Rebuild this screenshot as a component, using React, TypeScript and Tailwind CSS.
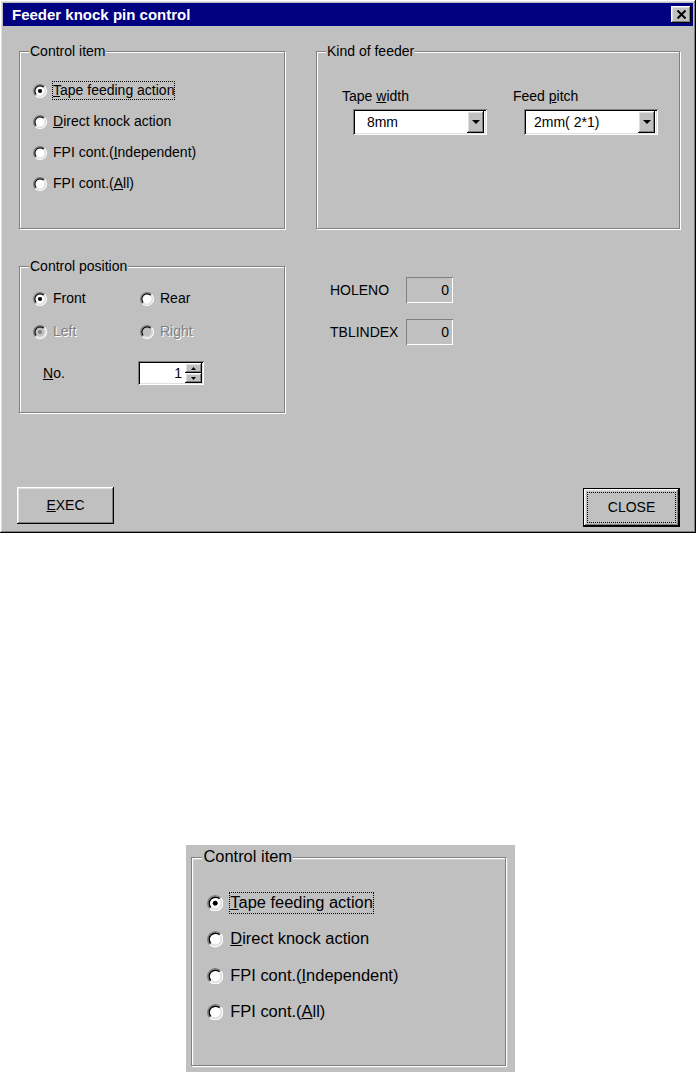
import React from 'react';

// Win95 bevels
const raised =
  'bg-[#c0c0c0] shadow-[inset_-1px_-1px_0_#000,inset_1px_1px_0_#fff,inset_-2px_-2px_0_#808080,inset_2px_2px_0_#dfdfdf]';
const sunken =
  'shadow-[inset_1px_1px_0_#808080,inset_-1px_-1px_0_#fff,inset_2px_2px_0_#000,inset_-2px_-2px_0_#dfdfdf]';

type RadioProps = {
  checked?: boolean;
  disabled?: boolean;
  focused?: boolean;
  children: React.ReactNode;
};

const RadioMark = ({ checked, disabled }: { checked?: boolean; disabled?: boolean }) => (
  <svg width="14" height="14" viewBox="0 0 12 12" className="shrink-0">
    <circle cx="6" cy="6" r="4.5" fill={disabled ? '#c0c0c0' : '#fff'} />
    <path d="M2.11 9.89A5.5 5.5 0 0 1 9.89 2.11" fill="none" stroke="#808080" />
    <path d="M9.89 2.11A5.5 5.5 0 0 1 2.11 9.89" fill="none" stroke="#fff" />
    <path d="M2.82 9.18A4.5 4.5 0 0 1 9.18 2.82" fill="none" stroke="#000" />
    <path d="M9.18 2.82A4.5 4.5 0 0 1 2.82 9.18" fill="none" stroke="#dfdfdf" />
    {checked && <circle cx="6" cy="6" r="1.8" fill={disabled ? '#808080' : '#000'} />}
  </svg>
);

const Radio = ({ checked, disabled, focused, children }: RadioProps) => (
  <div className="flex items-center">
    <RadioMark checked={checked} disabled={disabled} />
    <span
      className={`ml-[5px] whitespace-nowrap border leading-[17px] ${
        focused ? 'border-dotted border-black' : 'border-transparent'
      } ${disabled ? 'text-[#808080] [text-shadow:1px_1px_0_#fff]' : ''}`}
    >
      {children}
    </span>
  </div>
);

const GroupBox = ({
  label,
  className,
  children,
}: {
  label: string;
  className: string;
  children: React.ReactNode;
}) => (
  <div className={`relative shrink-0 border border-[#808080] shadow-[1px_1px_0_#fff,inset_1px_1px_0_#fff] ${className}`}>
    <span className="absolute left-[9px] top-[-9px] whitespace-nowrap bg-[#c0c0c0] px-[1px] leading-[16px]">
      {label}
    </span>
    {children}
  </div>
);

const ControlItemGroup = ({ className }: { className: string }) => (
  <GroupBox label="Control item" className={`h-[178px] ${className}`}>
    <div className="flex flex-col pl-[13px] pt-[23px]">
      <div className="flex h-[31px] items-center">
        <Radio checked focused>
          <u>T</u>ape feeding action
        </Radio>
      </div>
      <div className="flex h-[31px] items-center">
        <Radio>
          <u>D</u>irect knock action
        </Radio>
      </div>
      <div className="flex h-[31px] items-center">
        <Radio>
          FPI cont.(<u>I</u>ndependent)
        </Radio>
      </div>
      <div className="flex h-[31px] items-center">
        <Radio>
          FPI cont.(<u>A</u>ll)
        </Radio>
      </div>
    </div>
  </GroupBox>
);

const Combo = ({ value }: { value: string }) => (
  <div className={`ml-[11px] mt-[4px] flex h-[26px] w-[134px] bg-white p-[2px] ${sunken}`}>
    <div className="min-w-0 flex-1 whitespace-pre pl-[8px] leading-[22px]">{value}</div>
    <div className={`mr-[1px] flex w-[17px] shrink-0 items-center justify-center ${raised}`}>
      <svg width="8" height="4" viewBox="0 0 8 4">
        <polygon points="0,0 8,0 4,4" fill="#000" />
      </svg>
    </div>
  </div>
);

const Spin = ({ value }: { value: string }) => (
  <div className={`flex h-[24px] w-[66px] bg-white p-[2px] ${sunken}`}>
    <div className="min-w-0 flex-1 pr-[3px] text-right leading-[20px]">{value}</div>
    <div className="flex w-[17px] shrink-0 flex-col">
      <div className={`flex flex-1 items-center justify-center ${raised}`}>
        <svg width="5" height="3" viewBox="0 0 5 3">
          <polygon points="0,3 5,3 2.5,0" fill="#000" />
        </svg>
      </div>
      <div className={`flex flex-1 items-center justify-center ${raised}`}>
        <svg width="5" height="3" viewBox="0 0 5 3">
          <polygon points="0,0 5,0 2.5,3" fill="#000" />
        </svg>
      </div>
    </div>
  </div>
);

const Field = ({ label, value, className = '' }: { label: string; value: string; className?: string }) => (
  <div className={`flex items-center ${className}`}>
    <span className="w-[76px]">{label}</span>
    <div className="h-[26px] w-[47px] pr-[4px] text-right leading-[26px] shadow-[inset_1px_1px_0_#808080,inset_-1px_-1px_0_#fff]">
      {value}
    </div>
  </div>
);

const Dialog = () => (
  <div className={`h-[533px] w-[696px] p-[3px] ${raised}`}>
    <div className="flex h-[23px] items-center justify-between bg-[#000080] pl-[9px] pr-[2px]">
      <span className="text-[15px] font-bold leading-[23px] text-white">Feeder knock pin control</span>
      <div className={`flex h-[17px] w-[20px] items-center justify-center ${raised}`}>
        <svg width="11" height="9" viewBox="0 0 11 9">
          <path d="M1.5 0.5 L9.5 8.5 M9.5 0.5 L1.5 8.5" stroke="#000" strokeWidth="2" />
        </svg>
      </div>
    </div>

    <div className="pl-[16px]">
      <div className="mt-[25px] flex">
        <ControlItemGroup className="w-[266px]" />
        <GroupBox label="Kind of feeder" className="ml-[31px] h-[178px] w-[364px]">
          <div className="flex pl-[25px] pt-[36px]">
            <div className="w-[171px]">
              <div className="leading-[17px]">
                Tape <u>w</u>idth
              </div>
              <Combo value=" 8mm" />
            </div>
            <div>
              <div className="leading-[17px]">
                Feed <u>p</u>itch
              </div>
              <Combo value="2mm( 2*1)" />
            </div>
          </div>
        </GroupBox>
      </div>

      <div className="mt-[37px] flex">
        <GroupBox label="Control position" className="h-[147px] w-[266px]">
          <div className="pl-[13px] pt-[15px]">
            <div className="flex h-[33px] items-center">
              <div className="w-[107px]">
                <Radio checked>Front</Radio>
              </div>
              <Radio>Rear</Radio>
            </div>
            <div className="flex h-[33px] items-center">
              <div className="w-[107px]">
                <Radio checked disabled>
                  Left
                </Radio>
              </div>
              <Radio disabled>Right</Radio>
            </div>
            <div className="mt-[13px] flex items-center">
              <span className="ml-[10px] w-[95px]">
                <u>N</u>o.
              </span>
              <Spin value="1" />
            </div>
          </div>
        </GroupBox>
        <div className="ml-[45px] pt-[11px]">
          <Field label="HOLENO" value="0" />
          <Field label="TBLINDEX" value="0" className="mt-[16px]" />
        </div>
      </div>

      <div className="ml-[-2px] mt-[74px] flex w-[663px] items-start justify-between">
        <button className={`flex h-[37px] w-[97px] items-center justify-center ${raised}`}>
          <span>
            <u>E</u>XEC
          </span>
        </button>
        <button className="mt-[1px] h-[39px] w-[97px] border border-black bg-[#c0c0c0]">
          <div className={`h-full w-full p-[3px] ${raised}`}>
            <div className="flex h-full w-full items-center justify-center border border-dotted border-black">
              CLOSE
            </div>
          </div>
        </button>
      </div>
    </div>
  </div>
);

export default function App() {
  return (
    <div className="h-[1072px] overflow-hidden bg-white font-['Liberation_Sans',Arial,sans-serif] text-[14px] text-black">
      <Dialog />
      {/* enlarged detail of the first group */}
      <div className="ml-[186px] mt-[312px] h-[227px] w-[329px] bg-[#c0c0c0]">
        <div className="pl-[4px] pt-[10px] [zoom:1.175]">
          <ControlItemGroup className="w-[268px]" />
        </div>
      </div>
    </div>
  );
}
